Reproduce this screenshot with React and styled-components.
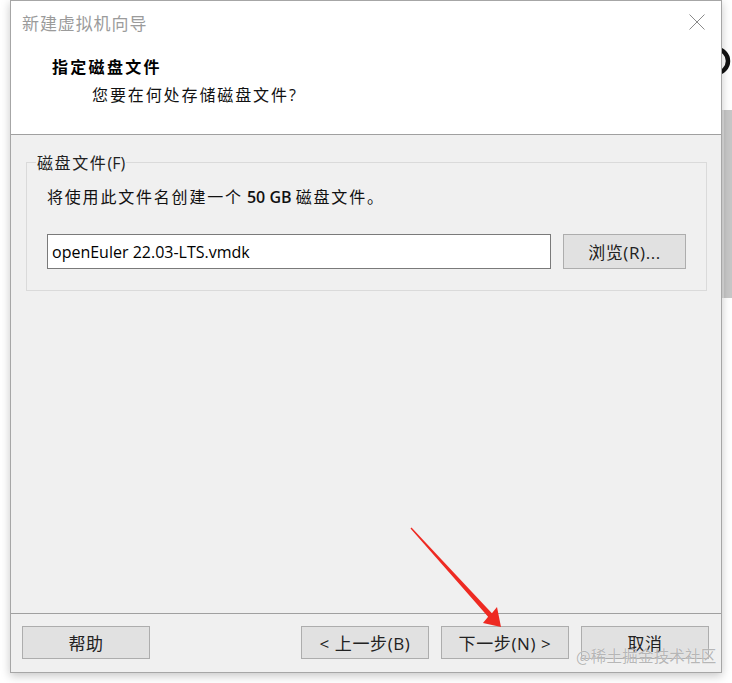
import React from "react";
import styled, { createGlobalStyle } from "styled-components";

const GlobalStyle = createGlobalStyle`
  html, body {
    margin: 0;
    padding: 0;
    background: #ffffff;
  }
  body {
    font-family: "Open Sans", "Noto Sans CJK SC", sans-serif;
  }
`;

const Page = styled.div`
  position: relative;
  display: flex;
  width: 732px;
  height: 683px;
  padding-left: 10px;
  box-sizing: border-box;
  overflow: hidden;
  background: #ffffff;
`;

const Dialog = styled.div`
  position: relative;
  z-index: 1;
  width: 712px;
  height: 673px;
  box-sizing: border-box;
  border: 1px solid #a6a6a6;
  display: flex;
  flex-direction: column;
  background: #f0f0f0;
  box-shadow: 0 3px 9px rgba(0, 0, 0, 0.22);
`;

const Header = styled.div`
  height: 133px;
  background: #ffffff;
  border-bottom: 1px solid #a0a0a0;
`;

const TitleBar = styled.div`
  height: 42px;
  display: flex;
  align-items: center;
  justify-content: space-between;
  padding: 0 16px 0 11px;
`;

const WindowTitle = styled.span`
  font-size: 17px;
  letter-spacing: 0.9px;
  color: #9b9b9b;
  font-family: "Noto Sans CJK SC", sans-serif;
`;

const Heading = styled.div`
  margin: 11px 0 0 41px;
  line-height: 24px;
  font-size: 16px;
  font-weight: bold;
  letter-spacing: 2.3px;
  color: #000;
  font-family: "Noto Sans CJK SC", sans-serif;
`;

const SubHeading = styled.div`
  margin: 4px 0 0 81px;
  line-height: 24px;
  font-size: 16px;
  letter-spacing: 1.9px;
  color: #111;
  font-family: "Noto Sans CJK SC", sans-serif;
`;

const Body = styled.div`
  flex: 1;
  padding: 15px 15px 0 15px;
`;

const GroupBox = styled.fieldset`
  margin: 0;
  padding: 0 20px 21px 20px;
  border: 1px solid #dadada;
  width: 680px;
  box-sizing: border-box;
`;

const Legend = styled.legend`
  margin-left: -11px;
  padding: 0 1px;
  line-height: 24px;
  font-size: 16px;
  letter-spacing: 1.6px;
  color: #222;
  font-family: "Noto Sans CJK SC", sans-serif;
`;

const Latin = styled.span`
  font-family: "Open Sans", sans-serif;
  letter-spacing: 0;
  font-weight: ${(p) => (p.bold ? 600 : 400)};
`;

const Info = styled.div`
  margin-top: 9px;
  line-height: 24px;
  font-size: 16px;
  letter-spacing: 1.8px;
  color: #111;
  font-family: "Noto Sans CJK SC", sans-serif;
`;

const FileRow = styled.div`
  margin-top: 25px;
  display: flex;
  gap: 12px;
`;

const FileInput = styled.div`
  width: 504px;
  height: 35px;
  box-sizing: border-box;
  border: 1px solid #7a7a7a;
  background: #ffffff;
  display: flex;
  align-items: center;
  padding-left: 4px;
  font-size: 16px;
  color: #000;
  font-family: "Open Sans", sans-serif;
`;

const Button = styled.div`
  width: ${(p) => p.w || 128}px;
  height: ${(p) => p.h || 33}px;
  box-sizing: border-box;
  border: 1px solid #adadad;
  background: #e1e1e1;
  display: flex;
  align-items: center;
  justify-content: center;
  font-size: 17px;
  letter-spacing: 0.6px;
  color: #222;
  font-family: "Open Sans", "Noto Sans CJK SC", sans-serif;
`;

const Footer = styled.div`
  border-top: 1px solid #a0a0a0;
  padding: 12px 12px 13px 11px;
  display: flex;
  align-items: center;
`;

const Spacer = styled.div`
  flex: 1;
`;

const NavGroup = styled.div`
  display: flex;
  gap: 12px;
`;

const Side = styled.div`
  flex: 1;
  display: flex;
  flex-direction: column;
`;

const SideTop = styled.div`
  height: 110px;
  background: #ffffff;
`;

const SideBand = styled.div`
  height: 188px;
  background: #c7c7c7;
  border-left: 2px solid #dcdcdc;
`;

const SideRest = styled.div`
  flex: 1;
  background: #ffffff;
`;

const Watermark = styled.div`
  position: absolute;
  z-index: 3;
  left: 576px;
  top: 644px;
  font-size: 15.5px;
  letter-spacing: 0.2px;
  color: rgba(160, 160, 160, 0.75);
  font-family: "Noto Sans CJK SC", sans-serif;
  text-shadow: 0 0 1px rgba(255, 255, 255, 0.9);
`;

const ArrowLayer = styled.svg`
  position: absolute;
  z-index: 2;
  left: 0;
  top: 0;
  pointer-events: none;
`;

function CloseIcon() {
  return (
    <svg width="16" height="16" viewBox="0 0 16 16">
      <path d="M0.5 0.5 L15.5 15.5 M15.5 0.5 L0.5 15.5" stroke="#8a8a8a" strokeWidth="1" fill="none" />
    </svg>
  );
}

function BackgroundRing() {
  return (
    <svg width="12" height="110" viewBox="0 0 12 110">
      <circle cx="-6" cy="61" r="12" stroke="#111" strokeWidth="4.5" fill="none" />
    </svg>
  );
}

export default function App() {
  return (
    <>
      <GlobalStyle />
      <Page>
        <Dialog>
          <Header>
            <TitleBar>
              <WindowTitle>新建虚拟机向导</WindowTitle>
              <CloseIcon />
            </TitleBar>
            <Heading>指定磁盘文件</Heading>
            <SubHeading>
              您要在何处存储磁盘文件<Latin>?</Latin>
            </SubHeading>
          </Header>
          <Body>
            <GroupBox>
              <Legend>
                磁盘文件<Latin>(F)</Latin>
              </Legend>
              <Info>
                将使用此文件名创建一个<Latin bold> 50 GB </Latin>磁盘文件。
              </Info>
              <FileRow>
                <FileInput>openEuler 22.03-LTS.vmdk</FileInput>
                <Button w={123} h={35}>浏览(R)...</Button>
              </FileRow>
            </GroupBox>
          </Body>
          <Footer>
            <Button>帮助</Button>
            <Spacer />
            <NavGroup>
              <Button>&lt; 上一步(B)</Button>
              <Button>下一步(N) &gt;</Button>
              <Button>取消</Button>
            </NavGroup>
          </Footer>
        </Dialog>
        <Side>
          <SideTop>
            <BackgroundRing />
          </SideTop>
          <SideBand />
          <SideRest />
        </Side>
        <ArrowLayer width="732" height="683" viewBox="0 0 732 683">
          <polygon
            points="410.5,528.5 488.1,616.7 483,623 501,627 497,607 491.9,613.3 411.5,527.5"
            fill="#ee2a22"
          />
        </ArrowLayer>
        <Watermark>@稀土掘金技术社区</Watermark>
      </Page>
    </>
  );
}
